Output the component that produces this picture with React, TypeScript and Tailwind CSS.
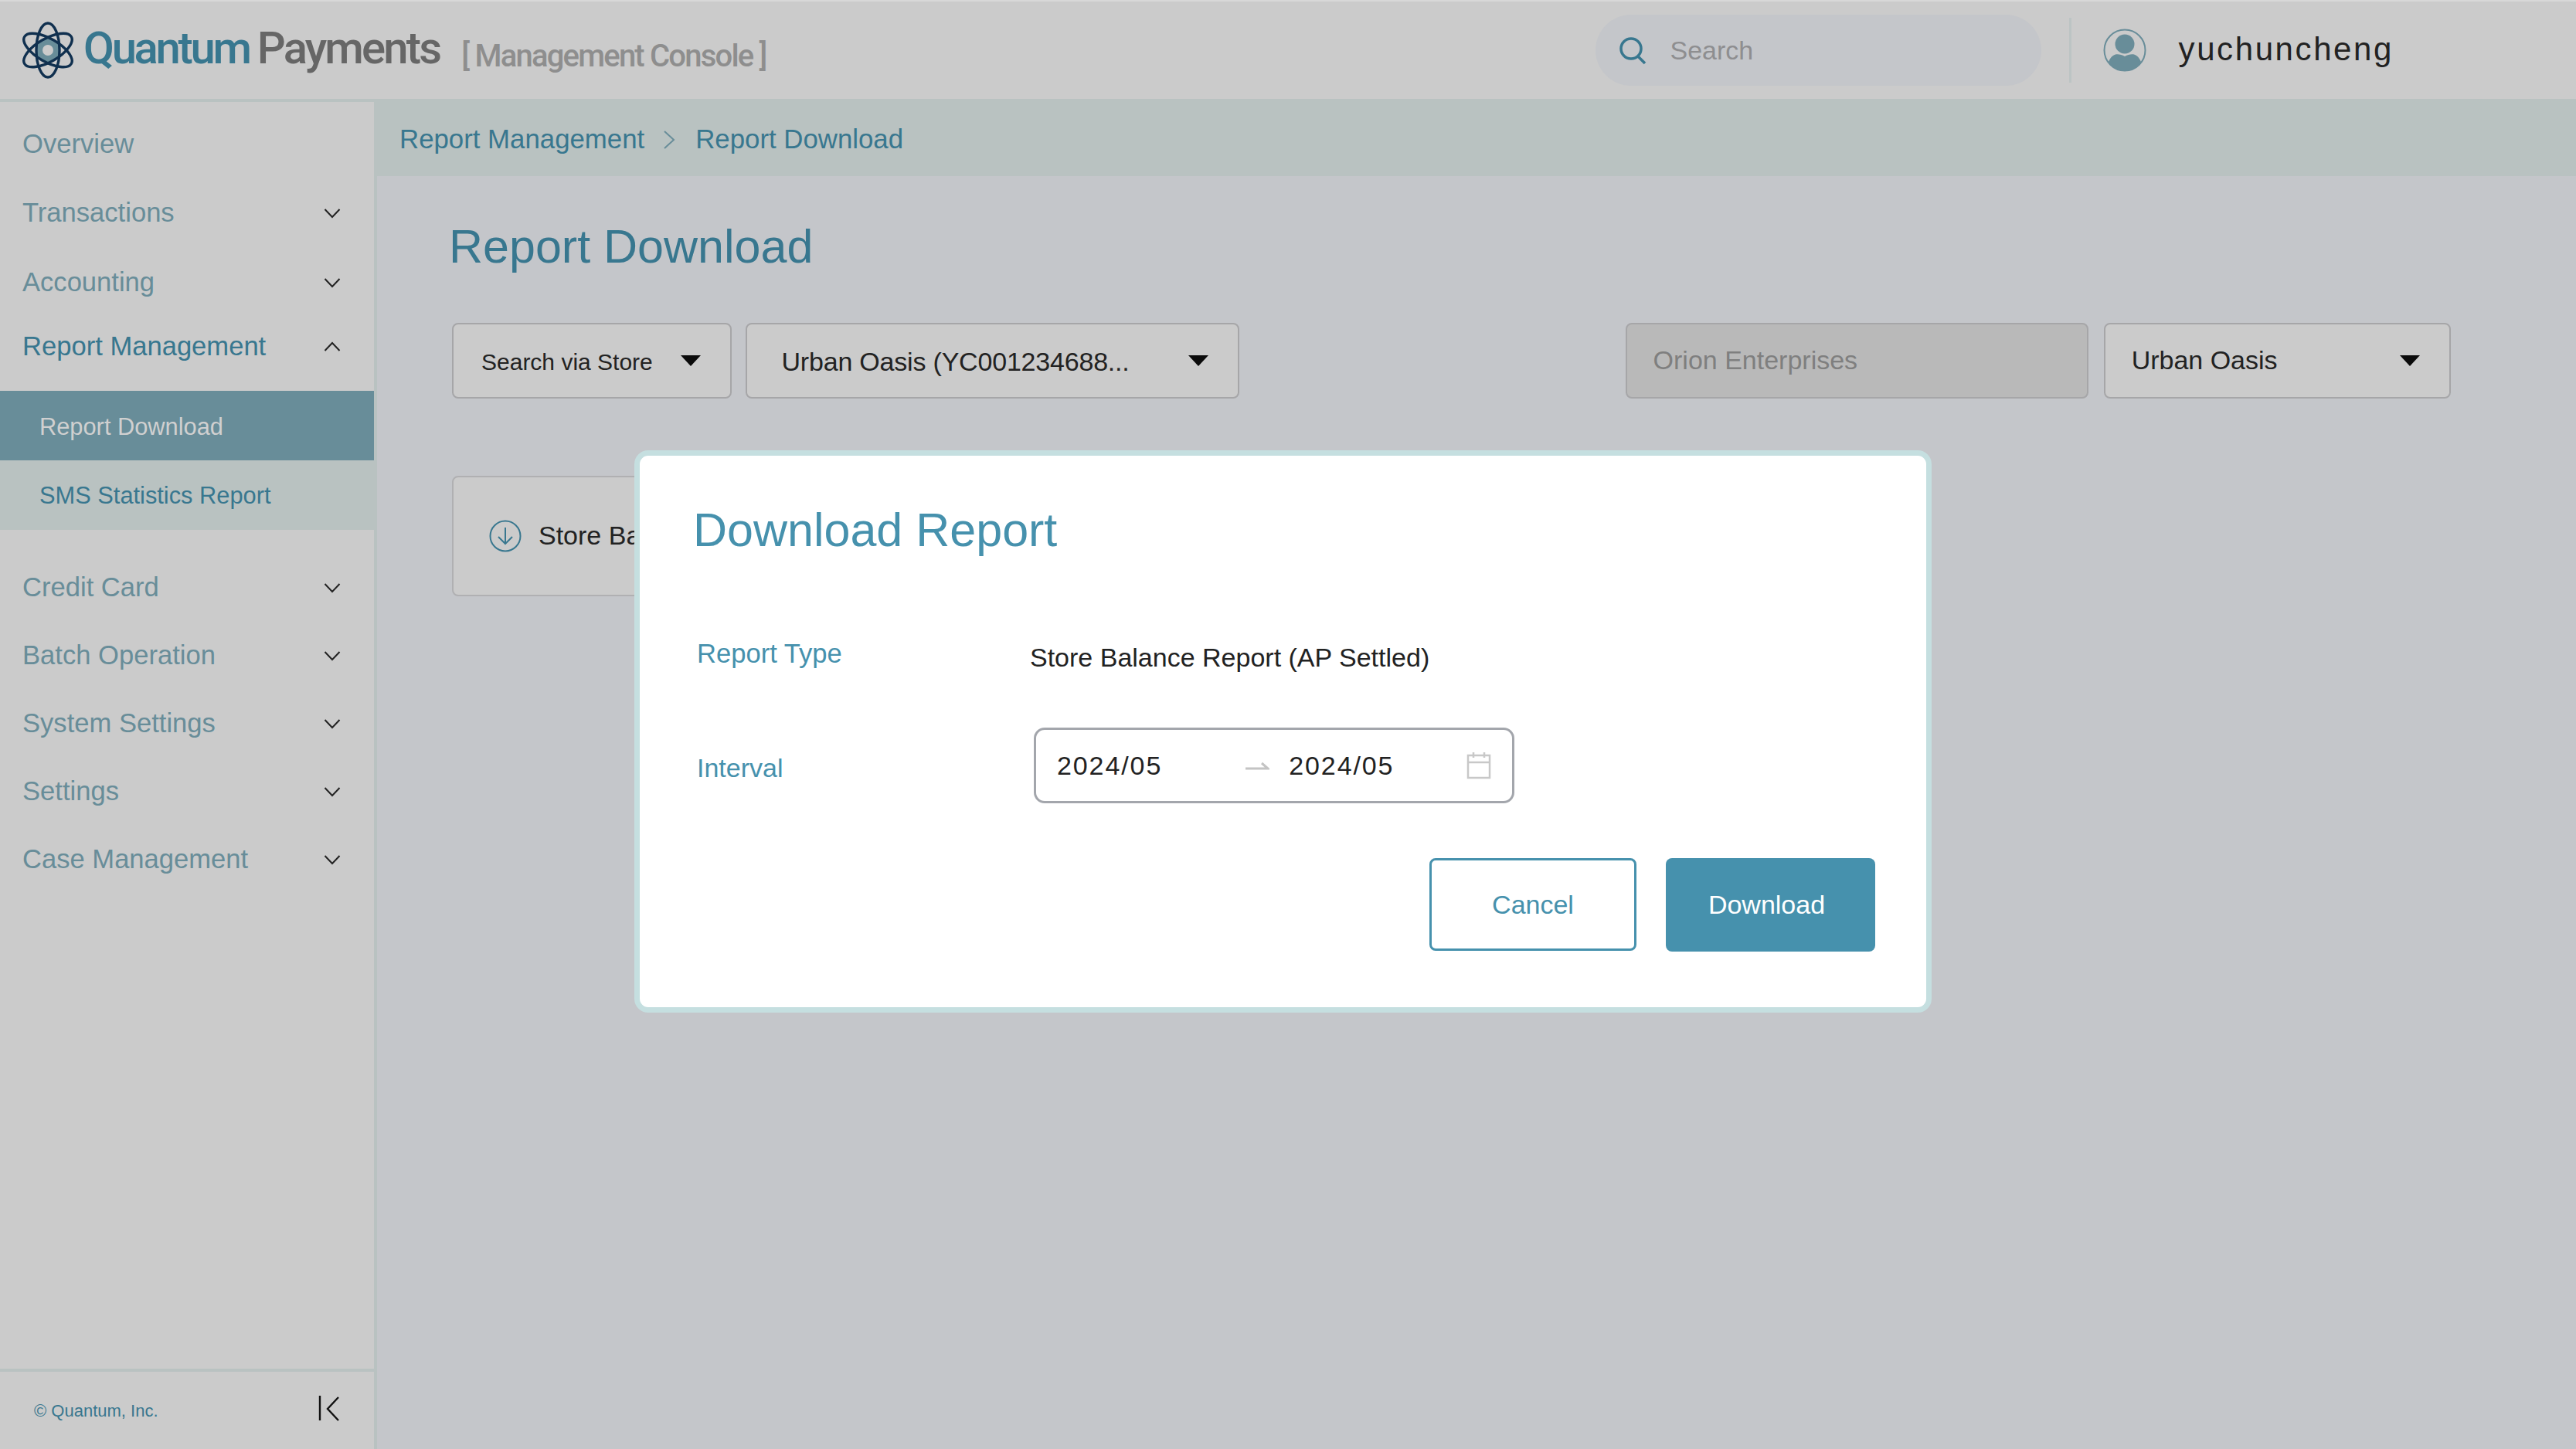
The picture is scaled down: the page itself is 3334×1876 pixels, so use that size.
import React from "react";

const Chevron = ({ up = false }: { up?: boolean }) => (
  <svg width="22" height="14" viewBox="0 0 22 14" fill="none" stroke={"#222"} strokeWidth="2">
    <path d={up ? "M1.5 12 L11 2 L20.5 12" : "M1.5 2 L11 12 L20.5 2"} />
  </svg>
);

const Caret = () => (
  <svg width="26" height="14" viewBox="0 0 26 14"><path d="M0 0 H26 L13 14 Z" fill="#0b0b0b" /></svg>
);

const Logo = () => (
  <svg width="70" height="74" viewBox="0 0 70 74" fill="none">
    <path d="M35 19 L50 28 V46 L35 55 L20 46 V28 Z" fill="#688d99" />
    <circle cx="35" cy="37" r="7" fill="#cbcbcb" />
    <g stroke="#10304f" strokeWidth="3.4">
      <ellipse cx="35" cy="37" rx="15" ry="35" />
      <ellipse cx="35" cy="37" rx="15" ry="35" transform="rotate(60 35 37)" />
      <ellipse cx="35" cy="37" rx="15" ry="35" transform="rotate(-60 35 37)" />
    </g>
  </svg>
);

const NavItem = ({ label, className = "" }: { label: string; className?: string }) => (
  <div className={`h-[88px] flex items-center justify-between pl-[29px] pr-[43px] text-[34.6px] text-[#688d99] ${className}`}>
    <span>{label}</span>
    <Chevron />
  </div>
);

export default function App() {
  return (
    <div
      className="relative w-[3334px] h-[1876px] overflow-hidden bg-[#c4c6ca] text-[#222]"
      style={{ fontFamily: '"Liberation Sans", Arial, sans-serif' }}
    >
      {/* Header */}
      <header className="h-[128px] bg-[#cbcbcb] border-t-2 border-[#d8d8d8] flex items-center pl-[27px]">
        <Logo />
        <div className="ml-[11px] -mt-[6px] flex items-baseline" style={{ fontFamily: '"Roboto", sans-serif' }}>
          <span className="text-[58px] font-medium text-[#38778f] tracking-[-3.3px]">Quantum</span>
          <span className="ml-[10px] text-[58px] font-medium text-[#666] tracking-[-2.8px]">Payments</span>
          <span className="ml-[28px] translate-y-[4px] text-[40px] font-medium text-[#8e8e8e] tracking-[-1.8px]">[ Management Console ]</span>
        </div>
        <div className="ml-auto flex items-center">
          <div className="w-[577px] h-[92px] rounded-[46px] bg-[#c4c6ca] flex items-center pl-[29px]">
            <svg width="38" height="38" viewBox="0 0 38 38" fill="none" stroke="#38778f" strokeWidth="3.5">
              <circle cx="17" cy="17" r="13" />
              <path d="M26 27 L35 36" />
            </svg>
            <span className="ml-[30px] text-[34px] text-[#8e8e90]">Search</span>
          </div>
          <div className="ml-[36px] w-[3px] h-[84px] bg-[#bcc4c4]" />
          <svg className="ml-[41px]" width="56" height="56" viewBox="0 0 56 56" fill="none">
            <circle cx="28" cy="28" r="26.5" stroke="#688d99" strokeWidth="2" />
            <circle cx="28" cy="20" r="12.5" fill="#688d99" />
            <path d="M7 43 C12 31 20 32 28 36 C36 32 44 31 49 43 C44 51 36 55 28 55 C20 55 12 51 7 43 Z" fill="#688d99" />
          </svg>
          <span className="ml-[42px] mr-[236px] -mt-[4px] text-[42px] tracking-[2.6px] text-[#222]">yuchuncheng</span>
        </div>
      </header>

      <div className="flex h-[1748px]">
        {/* Sidebar */}
        <aside className="w-[488px] shrink-0 bg-[#cbcbcb] border-t-4 border-r-4 border-[#b9c2c1] flex flex-col">
          <div className="h-[102px] flex items-center pl-[29px] pt-[8px] text-[34.6px] text-[#688d99]">Overview</div>
          <NavItem label="Transactions" className="-mt-[2px]" />
          <NavItem label="Accounting" className="mt-[2px]" />
          <div className="h-[78px] flex items-center justify-between pl-[29px] pr-[43px] text-[34.6px] text-[#38778f]">
            <span>Report Management</span>
            <Chevron up />
          </div>
          <div className="mt-[18px] h-[90px] bg-[#688d99] flex items-center pl-[51px] pt-[5px] text-[30.8px] text-[#d0d0d0]">Report Download</div>
          <div className="h-[90px] bg-[#b9c2c1] flex items-center pl-[51px] pt-[3px] text-[30.8px] text-[#38778f]">SMS Statistics Report</div>
          <NavItem label="Credit Card" className="mt-[31px]" />
          <NavItem label="Batch Operation" />
          <NavItem label="System Settings" />
          <NavItem label="Settings" />
          <NavItem label="Case Management" />
          <div className="mt-auto h-[104px] border-t-4 border-[#b9c2c1] flex items-center justify-between pl-[44px] pr-[44px]">
            <span className="text-[22px] text-[#38778f]">© Quantum, Inc.</span>
            <svg width="28" height="34" viewBox="0 0 28 34" fill="none" stroke="#111" strokeWidth="2.4" className="-mt-[6px]">
              <path d="M2 1 V33" />
              <path d="M26 3 L12 18 L26 33" />
            </svg>
          </div>
        </aside>

        {/* Main */}
        <main className="flex-1 min-w-0">
          <div className="h-[100px] bg-[#b9c2c1] flex items-center pl-[29px] pt-[5px] text-[34.8px] text-[#38778f]">
            <span>Report Management</span>
            <svg className="ml-[24px] mr-[26px]" width="16" height="26" viewBox="0 0 16 26" fill="none" stroke="#688d99" strokeWidth="2">
              <path d="M2 2 L14 13 L2 24" />
            </svg>
            <span>Report Download</span>
          </div>
          <div className="pl-[97px] pr-[162px]">
            <h1 className="mt-[48px] -ml-[4px] h-[88px] flex items-center text-[61px] text-[#38778f]">Report Download</h1>
            <div className="mt-[54px] flex h-[98px]">
              <div className="w-[362px] border-2 border-[#a6a6a8] rounded-[8px] bg-[#cbcbcb] flex items-center justify-between pl-[36px] pr-[38px] text-[30px]">
                <span className="mt-[2px]">Search via Store</span>
                <Caret />
              </div>
              <div className="ml-[18px] w-[640px] border-2 border-[#a6a6a8] rounded-[8px] bg-[#cbcbcb] flex items-center justify-between pl-[45px] pr-[38px] text-[34px] tracking-[-0.2px]">
                <span className="mt-[2px]">Urban Oasis (YC001234688...</span>
                <Caret />
              </div>
              <div className="ml-[500px] w-[600px] border-2 border-[#a6a6a8] rounded-[8px] bg-[#b9b9b9] flex items-center pl-[34px] pb-[2px] text-[34px] text-[#7f7f7f]">
                Orion Enterprises
              </div>
              <div className="ml-[20px] w-[450px] border-2 border-[#a6a6a8] rounded-[8px] bg-[#cbcbcb] flex items-center justify-between pl-[34px] pr-[38px] text-[34px]">
                <span className="-mt-[2px]">Urban Oasis</span>
                <Caret />
              </div>
            </div>
            <div className="mt-[100px] w-[700px] h-[156px] border-2 border-[#b0b0b2] rounded-[8px] bg-[#cbcbcb] flex items-center pl-[46px] text-[34px]">
              <svg width="42" height="42" viewBox="0 0 42 42" fill="none" stroke="#38778f" strokeWidth="2">
                <circle cx="21" cy="21" r="19.5" />
                <path d="M21 10 V31 M12 22 L21 31 L30 22" />
              </svg>
              <span className="ml-[22px] -mt-[2px]">Store Balance Report</span>
            </div>
          </div>
        </main>
      </div>

      {/* Modal */}
      <div className="absolute left-[821px] top-[583px] w-[1679px] h-[728px] bg-white border-[7px] border-[#c5dfe0] rounded-[18px] pl-[69px] pr-[66px]">
        <h2 className="mt-[57px] h-[80px] flex items-center text-[61px] text-[#4691ad]">Download Report</h2>
        <div className="mt-[94px] flex h-[60px] items-center">
          <div className="w-[436px] pl-[5px] -mt-[8px] text-[34.6px] text-[#4691ad]">Report Type</div>
          <div className="text-[34px] text-[#222]">Store Balance Report (AP Settled)</div>
        </div>
        <div className="mt-[61px] flex h-[98px] items-center">
          <div className="w-[441px] pl-[5px] pt-[6px] text-[34px] text-[#4691ad]">Interval</div>
          <div className="w-[622px] h-[98px] border-[3px] border-[#a3a6ac] rounded-[14px] flex items-center pl-[27px] pr-[27px] text-[34px] text-[#222]">
            <span className="tracking-[1.9px]">2024/05</span>
            <svg className="ml-[107px]" width="32" height="14" viewBox="0 0 32 14" fill="none" stroke="#c4c4c4" strokeWidth="3">
              <path d="M1 11 H30 L22 4" />
            </svg>
            <span className="ml-[25px] tracking-[1.9px]">2024/05</span>
            <svg className="ml-auto" width="32" height="36" viewBox="0 0 32 36" fill="none" stroke="#c8c8c8" strokeWidth="2.5">
              <rect x="2" y="5" width="28" height="29" />
              <path d="M2 14 H30 M9 1 V8 M23 1 V8" />
            </svg>
          </div>
        </div>
        <div className="mt-[71px] flex justify-end gap-[38px]">
          <div className="w-[268px] h-[120px] border-[3px] border-[#4691ad] rounded-[8px] bg-white flex items-center justify-center text-[34px] text-[#4691ad]">Cancel</div>
          <div className="w-[271px] h-[121px] rounded-[8px] bg-[#4691ad] flex items-center justify-center pr-[10px] text-[34px] text-white">Download</div>
        </div>
      </div>
    </div>
  );
}
